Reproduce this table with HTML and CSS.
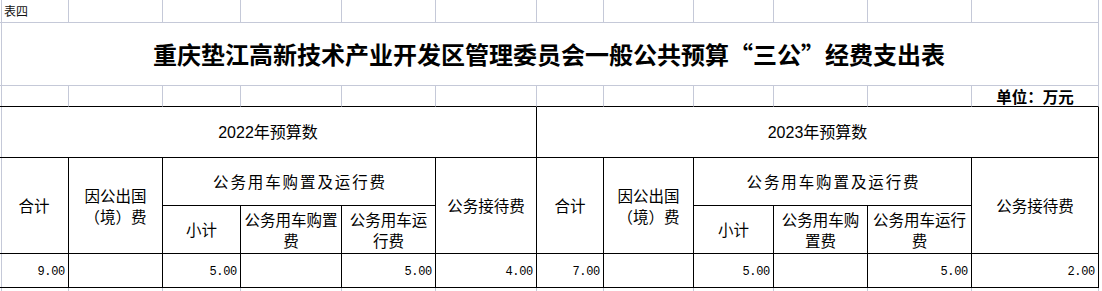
FILE: index.html
```html
<!DOCTYPE html>
<html lang="zh-CN">
<head>
<meta charset="utf-8">
<title>重庆垫江高新技术产业开发区管理委员会一般公共预算“三公”经费支出表</title>
<link rel="stylesheet" href="styles.css">
</head>
<body>
<div class="sheet">
  <!-- row 1 -->
  <div class="g r1 note">表四</div>
  <div class="g r1"></div><div class="g r1"></div><div class="g r1"></div>
  <div class="g r1"></div><div class="g r1"></div><div class="g r1"></div>
  <div class="g r1"></div><div class="g r1"></div><div class="g r1"></div>
  <div class="g r1"></div><div class="g r1"></div>
  <!-- row 2 -->
  <div class="g title">重庆垫江高新技术产业开发区管理委员会一般公共预算“三公”经费支出表</div>
  <!-- row 3 -->
  <div class="g r3"></div><div class="g r3"></div><div class="g r3"></div>
  <div class="g r3"></div><div class="g r3"></div><div class="g r3"></div>
  <div class="g r3"></div><div class="g r3"></div><div class="g r3"></div>
  <div class="g r3"></div><div class="g r3"></div>
  <div class="g r3 unit">单位：万元</div>
  <!-- row 4 -->
  <div class="c year y1">2022年预算数</div>
  <div class="c year y2">2023年预算数</div>
  <!-- rows 5-6, 2022 -->
  <div class="c tall c1">合计</div>
  <div class="c tall c2 two">因公出国<br>（境）费</div>
  <div class="c car c3">公务用车购置及运行费</div>
  <div class="c tall c6">公务接待费</div>
  <!-- rows 5-6, 2023 -->
  <div class="c tall c7">合计</div>
  <div class="c tall c8 two">因公出国<br>（境）费</div>
  <div class="c car c9">公务用车购置及运行费</div>
  <div class="c tall c12">公务接待费</div>
  <!-- row 6 -->
  <div class="c sub c3">小计</div>
  <div class="c sub c4 two">公务用车购置<br>费</div>
  <div class="c sub c5 two">公务用车运<br>行费</div>
  <div class="c sub c9">小计</div>
  <div class="c sub c10 two">公务用车购<br>置费</div>
  <div class="c sub c11 two">公务用车运行<br>费</div>
  <!-- row 7 data -->
  <div class="c num">9.00</div>
  <div class="c num"></div>
  <div class="c num">5.00</div>
  <div class="c num"></div>
  <div class="c num">5.00</div>
  <div class="c num">4.00</div>
  <div class="c num">7.00</div>
  <div class="c num"></div>
  <div class="c num">5.00</div>
  <div class="c num"></div>
  <div class="c num">5.00</div>
  <div class="c num">2.00</div>
  <!-- row 8 -->
  <div class="g r8"></div><div class="g r8"></div><div class="g r8"></div>
  <div class="g r8"></div><div class="g r8"></div><div class="g r8"></div>
  <div class="g r8"></div><div class="g r8"></div><div class="g r8"></div>
  <div class="g r8"></div><div class="g r8"></div><div class="g r8"></div>
</div>
</body>
</html>
```

FILE: styles.css
```css
html, body {
  margin: 0;
  padding: 0;
  background: #fff;
}

body {
  width: 1102px;
  height: 291px;
  overflow: hidden;
  background: linear-gradient(#c5c9d8, #c5c9d8) 1px 0 / 1px 100% no-repeat, #fff;
  font-family: "Noto Sans CJK SC", "Liberation Sans", sans-serif;
  color: #000;
}

.sheet {
  display: grid;
  grid-template-columns: 69px 94px 78px 101px 94px 101px 67px 90px 80px 94px 104px 127px;
  grid-template-rows: 23px 63px 21px 51px 48px 48px 34px 3px;
  width: 1099px;
}

.sheet > div {
  box-sizing: border-box;
}

/* light gridline cells */
.g {
  border-right: 1px solid #c5c9d8;
  border-bottom: 1px solid #c5c9d8;
}

.note {
  font-size: 12px;
  line-height: 22px;
  padding-left: 4px;
  color: #111;
}

.title {
  grid-column: 1 / span 12;
  display: flex;
  align-items: center;
  justify-content: center;
  font-size: 24px;
  font-weight: 700;
  padding-bottom: 1px;
}

.r3 {
  border-bottom-color: #000;
}

.unit {
  display: flex;
  align-items: flex-end;
  justify-content: center;
  font-size: 15.5px;
  font-weight: 700;
  line-height: 18px;
  padding-bottom: 1px;
}

.r8 {
  border-bottom: none;
}

/* table cells */
.c {
  border-right: 1px solid #000;
  border-bottom: 1px solid #000;
  display: flex;
  align-items: center;
  justify-content: center;
  text-align: center;
  font-size: 15.5px;
  line-height: 21px;
}

.year {
  font-family: "Liberation Sans", "Noto Sans CJK SC", sans-serif;
  font-size: 16px;
}

.y1 { grid-column: 1 / span 6; }
.y2 { grid-column: 7 / span 6; }

.tall { grid-row: 5 / span 2; }

.car {
  grid-row: 5;
  grid-column: span 3;
  letter-spacing: 1.9px;
  padding-left: 2px;
}

.sub { grid-row: 6; }

.c1 { grid-column: 1; }
.c2 { grid-column: 2; }
.c3 { grid-column: 3 / span 3; }
.sub.c3 { grid-column: 3; }
.c4 { grid-column: 4; }
.c5 { grid-column: 5; }
.c6 { grid-column: 6; }
.c7 { grid-column: 7; }
.c8 { grid-column: 8; }
.c9 { grid-column: 9 / span 3; }
.sub.c9 { grid-column: 9; }
.c10 { grid-column: 10; }
.c11 { grid-column: 11; }
.c12 { grid-column: 12; }

.num {
  grid-row: 7;
  justify-content: flex-end;
  font-family: "Liberation Mono", "DejaVu Sans Mono", monospace;
  font-size: 12px;
  letter-spacing: -0.3px;
  padding: 3px 3px 0 0;
}
```
